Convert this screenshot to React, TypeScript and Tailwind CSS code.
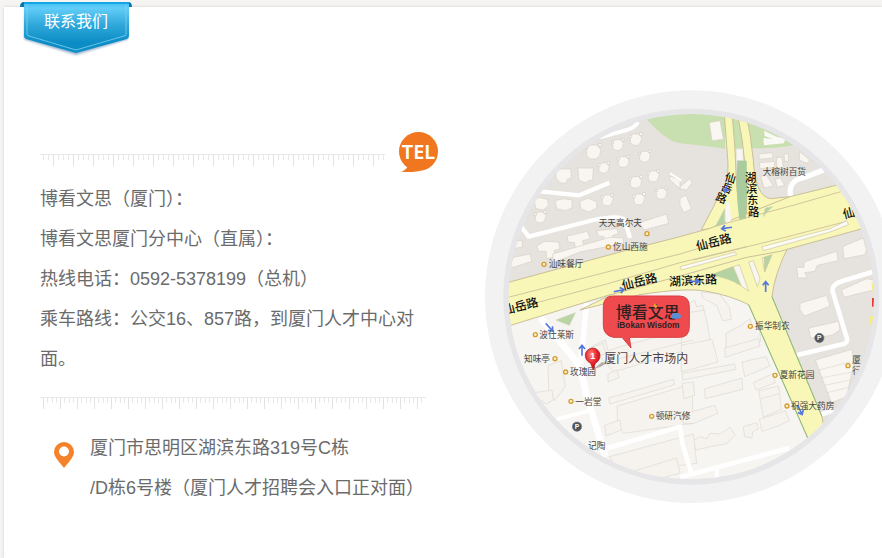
import React from "react";

const CJK = "font-['Liberation_Sans','Noto_Sans_CJK_SC',sans-serif]";

function Ribbon() {
  return (
    <h1 className="relative ml-4 -mt-[5px] flex h-14 w-28 justify-center text-white">
      <svg className="absolute inset-0 h-14 w-28" viewBox="0 0 112 56" aria-hidden="true">
        <defs>
          <linearGradient id="ribbon" x1="0" y1="0" x2="0" y2="1">
            <stop offset="0" stopColor="#3cbcf0" />
            <stop offset="0.12" stopColor="#62cdf8" />
            <stop offset="0.45" stopColor="#2fa8da" />
            <stop offset="0.8" stopColor="#0a8cc4" />
            <stop offset="1" stopColor="#0f8fc6" />
          </linearGradient>
          <filter id="soft" x="-10%" y="-10%" width="120%" height="130%">
            <feGaussianBlur stdDeviation="1.2" />
          </filter>
        </defs>
        <path d="M5 4H108V36Q108 38 106 38L56 53L6 38Q4 38 4 35Z" fill="#5a7fae" opacity="0.6" filter="url(#soft)" />
        <path d="M0 5Q0 0 4 0H108Q112 0 112 5Z" fill="#0876a6" />
        <path d="M4 0H109V34Q109 36 107 37L56 51L6 37Q4 36 4 34Z" fill="url(#ribbon)" />
        <path d="M4 0H109V2H4Z" fill="#14a5e4" />
        <path d="M7 2V32Q7 34 9 34L56 48L104 34Q106 34 106 32V2" fill="none" stroke="#7fd0f2" strokeWidth="1" opacity="0.8" />
      </svg>
      <span className="relative text-base leading-10 font-normal">联系我们</span>
    </h1>
  );
}

function Ruler({ id, step, start, className }: { id: string; step: number; start: number; className: string }) {
  return (
    <svg className={className} aria-hidden="true">
      <defs>
        <pattern id={id} x={start} y="0" width={step} height="13" patternUnits="userSpaceOnUse">
          <path d="M0 0H1V12H0Z" fill="#e2e2e2" />
          {[1, 2, 3].map((n) => (
            <rect key={n} x={Math.round((n * step) / 4)} y="1" width="1" height="5" fill="#e8e8e8" />
          ))}
        </pattern>
      </defs>
      <rect width="100%" height="13" fill={`url(#${id})`} />
      <rect width="100%" height="1" fill="#e8e8e8" />
    </svg>
  );
}

function TelBadge() {
  return (
    <svg className="h-10 w-10 shrink-0" viewBox="0 0 40 40" role="img" aria-label="TEL">
      <circle cx="20.500" cy="19.500" r="19.500" fill="#f0771f" />
      <path d="M22 39Q10 41 3 40Q8 38 10 34Z" fill="#f0771f" />
      <text x="20.500" y="27" textAnchor="middle" fontSize="20" fontWeight="600" fill="#fff" fontFamily="Noto Sans, sans-serif">TEL</text>
    </svg>
  );
}

function PinIcon() {
  return (
    <svg className="mt-[14px] h-[26px] w-5 shrink-0" viewBox="0 0 20 26" aria-hidden="true">
      <path d="M10 0A10 10 0 0 1 20 10C20 15 14 21 10 26C6 21 0 15 0 10A10 10 0 0 1 10 0ZM10 4.500A5 5 0 1 0 10 14.500A5 5 0 1 0 10 4.500Z" fill="#f5822a" fillRule="evenodd" />
    </svg>
  );
}

const houses: [number, number, number][] = [
  [341, 216, 21], [414, 195, 16], [468, 179, 17], [495, 230, 16], [431, 246, 16], [372, 264, 15],
  [468, 307, 17], [521, 289, 16], [478, 358, 16], [545, 341, 16], [383, 361, 16], [182, 412, 16],
];

const upperBlocks = [
  "228,268 272,266 274,294 262,298 258,310 240,308 228,294",
  "294,264 340,264 338,300 324,302 320,308 302,304 296,296",
  "162,360 178,352 202,358 206,376 190,390 168,386",
  "226,362 250,356 276,360 276,384 256,392 230,386",
  "300,364 324,354 350,366 350,384 326,396 302,386",
  "170,498 194,484 236,486 240,506 222,512 226,530 200,536 198,514 176,514",
  "262,468 322,454 330,476 308,482 312,502 286,508 284,488 264,486",
  "350,452 410,446 416,460 396,468 400,480 376,486 372,470 354,468",
  "478,428 560,402 566,430 492,450",
  "100,532 150,522 156,544 100,562 90,558",
  "110,484 126,480 128,500 104,506",
  "218,522 390,472 430,474 430,490 300,516 220,548",
  "568,288 600,300 600,326 570,300",
  "600,320 630,296 636,308 620,330 600,326",
  "600,355 618,345 634,386 612,398 600,375",
  "836,222 876,218 880,234 838,238",
  "838,248 884,244 884,262 840,266", "890,232 906,232 910,262 890,264",
  "912,222 924,220 926,244 914,244", "958,214 990,240 980,250 958,240",
  "842,288 860,286 880,318 852,324", "886,298 902,294 914,316 892,322",
  "972,546 1070,514 1074,542 1012,556 1004,574 974,578 982,594 954,594 950,562 972,562",
  "1088,500 1150,474 1160,510 1154,524 1092,536",
  "1084,630 1160,596 1180,600 1180,630 1092,652",
  "960,670 1040,646 1050,678 974,708 960,690",
  "986,744 1076,724 1080,750 1056,766 992,774",
  "1006,840 1116,808 1120,860 1100,950 1054,968",
];

const lowerBlocks = [
  "334,800 376,780 384,812 420,800 640,742 640,804 400,876",
  "340,800 370,790 376,820 348,832", "384,882 410,870 418,892 384,906",
  "386,954 580,898 584,914 390,972",
  "412,978 636,912 640,1030 430,1060 412,1028", "374,1036 420,1020 424,1050 378,1068",
  "204,856 244,842 256,920 224,962 206,930", "150,940 216,930 220,960 200,972",
  "664,636 718,642 748,680 754,718 728,722 710,676 668,654",
  "612,680 644,660 650,680 668,676 682,730 690,780 614,806 604,790",
  "738,760 782,736 810,716 816,740 838,744 842,784 738,812",
  "734,804 836,776 840,798 736,832", "604,796 696,778 714,846 604,876",
  "606,880 764,852 768,868 608,900", "606,910 640,906 644,946 612,956",
  "674,926 786,894 788,928 676,956", "786,846 858,830 870,858 794,890",
  "820,908 880,880 886,908 828,930", "836,932 896,918 904,988 850,1012",
  "604,1004 704,976 714,1000 642,1030 610,1030",
  "638,1082 660,1070 680,1076 690,1060 720,1062 750,1042 766,1066 738,1092 700,1098 648,1110",
  "790,1040 830,1028 836,1046 818,1056 816,1074 794,1070",
  "838,1018 916,992 928,1022 900,1036 846,1054",
  "388,1130 640,1062 650,1150 420,1180", "440,1180 590,1134 600,1180 520,1200",
];

const pins: [number, number, string, number, number][] = [
  [501, 461, "天天高尔夫", 356, 438], [385, 501, "仡山西施", 399, 509], [192, 553, "汕味餐厅", 206, 562],
  [166, 764, "波仕莱斯", 178, 773], [225, 836, "知味亭", 132, 845], [257, 876, "玫瑰园", 270, 886],
  [273, 964, "一岩堂", 286, 974], [515, 1009, "顿研汽修", 527, 1018], [811, 739, "振华制衣", 825, 748],
  [885, 886, "夏新花园", 899, 895], [921, 978, "祝强大药房", 933, 988], [1104, 857, "厦", 1117, 850],
];

const arrows: [number, number, number][] = [
  [417, 632, -12], [306, 811, -90], [740, 444, 172], [857, 620, -90], [642, 604, 0], [740, 322, 112], [208, 742, 48], [960, 990, 65],
];

const roadNames: [number, number, number, string][] = [
  [652, 512, -14, "仙岳路"], [429, 630, -14, "仙岳路"], [72, 704, -14, "仙岳路"], [1092, 416, -14, "仙"], [568, 618, -3, "湖滨东路"],
];

function MapPicture() {
  return (
    <svg
      className="block h-[413px] w-[413px] shrink-0"
      viewBox="15 30 1239 1239"
      role="img"
      aria-label="厦门人才市场内地图"
      fontFamily="Liberation Sans, Noto Sans CJK SC, sans-serif"
    >
      <defs>
        <clipPath id="lens"><circle cx="634" cy="650" r="548" /></clipPath>
        <radialGradient id="marker" cx="0.4" cy="0.3" r="0.8">
          <stop offset="0" stopColor="#ff8a80" />
          <stop offset="0.5" stopColor="#e8222a" />
          <stop offset="1" stopColor="#a80d14" />
        </radialGradient>
      </defs>
      <circle cx="634" cy="650" r="619" fill="#f2f2f2" />
      <circle cx="634" cy="650" r="564" fill="#e6e6e8" />
      <g clipPath="url(#lens)">
        <rect x="60" y="80" width="1150" height="1150" fill="#e6e2dd" />
        <path d="M60 740L600 590L720 600L810 660L1010 1100V1230H60Z" fill="#f7f5f1" />
        <path d="M1010 1040H1210V1230H960Z" fill="#f7f5f1" />

        <path d="M500 118Q560 185 600 190Q680 198 735 206V90H500Z" fill="#c8dfb0" />
        <path d="M750 90H1010V180Q900 210 815 204L760 206Z" fill="#c8dfb0" />
        <path d="M688 128L720 122L730 178L696 182Z" fill="#faf7f2" stroke="#d8d0c6" strokeWidth="2" />
        <path d="M852 152L890 170L920 176L910 188L854 168ZM850 174L914 180L912 190L852 196Z" fill="#fbf9f5" />

        <g fill="#f9f6f1" stroke="#d8d0c6" strokeWidth="2">
          {upperBlocks.map((p) => <polygon key={p} points={p} />)}
          {houses.map(([x, y, r]) => (
            <g key={`${x}-${y}`}>
              <path d={`M${x - r} ${y - r / 2}L${x - r / 2} ${y - r}H${x + r / 2}L${x + r} ${y - r / 3}L${x + r - 3} ${y + r / 2}L${x + r / 3} ${y + r}H${x - r / 2}L${x - r} ${y + r / 2}Z`} />
              <rect x={x + r - 6} y={y - r - 4} width="8" height="8" />
              <rect x={x - r - 4} y={y - r + 3} width="7" height="7" />
            </g>
          ))}
        </g>
        <g fill="#f6f3ee" stroke="#dcd8d1" strokeWidth="2">
          {lowerBlocks.map((p) => <polygon key={p} points={p} />)}
        </g>
        <path d="M1016 870L1110 846M1022 894L1118 876M1034 916L1110 900M1042 938L1106 922M842 956L896 942M610 700L676 690M416 836L640 780" fill="none" stroke="#dcd8d1" strokeWidth="2" />

        <g fill="none" stroke="#fff" strokeLinejoin="round">
          <path d="M360 172L440 150Q466 142 474 126" strokeWidth="12" />
          <path d="M180 334L298 346L388 308" strokeWidth="13" />
          <path d="M120 435L146 470L340 420Q420 404 434 420L450 474" strokeWidth="13" />
          <path d="M932 350Q922 300 975 292L1030 270" strokeWidth="16" />
          <path d="M940 828L1090 792Q1108 786 1098 766L1058 634Q1054 612 1090 602L1190 572" strokeWidth="14" />
          <path d="M570 280L604 302" strokeWidth="6" />
          <path d="M180 712L270 820Q304 855 318 940L376 1130" strokeWidth="20" />
          <path d="M320 670L302 850" strokeWidth="16" />
          <path d="M230 1018L334 990" strokeWidth="12" />
          <path d="M376 1106L600 1040L607 1090L634 1180" strokeWidth="14" />
          <path d="M600 1192L928 1104" strokeWidth="14" />
          <path d="M1010 1010L1060 990" strokeWidth="14" />
          <path d="M710 1160V1210" strokeWidth="12" />
        </g>

        <g fill="#f9f7b7" stroke="#c9bf98" strokeWidth="3">
          <path d="M732 90H755Q766 200 768 280Q772 370 786 430L664 450L724 335Q746 300 744 250Z" />
          <path d="M774 90H796Q812 160 820 240Q826 350 872 356L930 350L940 400L800 430Q804 250 774 110Z" />
          <path d="M300 690L480 644Q620 622 680 634Q750 646 806 674L990 1090H1040L1026 1010L876 650Q884 580 925 500L770 530L480 602Z" />
          <path d="M60 614L420 516L600 470L690 445L930 350L1190 286V434L900 514L800 532L600 588L370 650L60 746Z" />
        </g>
        <path d="M772 242H800Q804 330 798 416L778 420Q766 330 772 242Z" fill="#a9cc9e" />
        <path d="M734 386V430L706 440ZM856 384L878 380L862 394L850 410Z" fill="#b3d3a3" stroke="#cdd5b8" strokeWidth="2" />
        <path d="M690 586L758 560L782 616Q740 590 690 586ZM852 532L876 524L854 576Z" fill="#b3d3a3" stroke="#c5c79c" strokeWidth="2" />
        <path d="M228 720L286 698L268 736Z" fill="#b9d5a5" stroke="#cdd5b8" strokeWidth="2" />
        <path d="M770 208H788V240H770ZM738 370L748 366L754 420L738 432Z" fill="#f7f6f2" />
        <path d="M760 560L778 554L806 634L784 618ZM806 546L820 542L840 596L832 620ZM846 534L852 532L854 576Z" fill="#f7f6f2" stroke="#cfc69d" strokeWidth="2" />
        <path d="M88 651L420 566L600 522L700 492M88 690L380 612L600 548L800 500M700 440L932 378L1100 330M640 540L900 476L1100 424" fill="none" stroke="#cfc69d" strokeWidth="3" />
        <path d="M846 500L1050 446L1100 422L1106 434L1050 456L850 512Z" fill="#fbfaf5" stroke="#cfc69d" strokeWidth="2" />
        <path d="M600 560L766 516L770 524L604 570Z" fill="#fbfaf5" stroke="#cfc69d" strokeWidth="2" />
        <path d="M806 674L988 1084M876 650L1026 1010" fill="none" stroke="#8cbf78" strokeWidth="3" />
        <path d="M1176 654H1190V680H1176Z" fill="#e43b3b" />
        <path d="M1174 610H1190V636H1178ZM1170 708H1190V734H1170Z" fill="#f5ef80" />

        <g fontSize="36" fontWeight="500" fill="#111">
          {roadNames.map(([x, y, a, name]) => (
            <text key={`${x}-${y}`} x={x} y={y} transform={`rotate(${a} ${x} ${y})`}>{name}</text>
          ))}
          {["湖", "滨", "东", "路"].map((c, i) => <text key={c} x={795 + i * 3} y={305 + i * 34} fontSize="34">{c}</text>)}
          <text x="735" y="306" fontSize="33" transform="rotate(16 752 294)">仙</text>
          <text x="724" y="336" fontSize="33" transform="rotate(22 740 324)">岳</text>
          <text x="708" y="367" fontSize="33" transform="rotate(22 726 354)">路</text>
        </g>

        <g fill="none" stroke="#5577dd" strokeWidth="5">
          {arrows.map(([x, y, a]) => (
            <path key={`${x}-${y}`} d="M-16 0H15M4 -9L15 0L4 9" transform={`translate(${x} ${y}) rotate(${a})`} />
          ))}
        </g>

        {pins.map(([x, y, name, tx, ty]) => (
          <g key={`${x}-${y}`}>
            <circle cx={x} cy={y} r="6" fill="#fff3c4" stroke="#d59b32" strokeWidth="4" />
            <text x={tx} y={ty} fontSize="26" fill="#444">{name}</text>
          </g>
        ))}
        <text x="848" y="285" fontSize="26" fill="#444">大榕树百货</text>
        <text x="324" y="1106" fontSize="26" fill="#444">记陶</text>
        <text x="1117" y="882" fontSize="26" fill="#444">行</text>

        {[[291, 1040], [1018, 774]].map(([x, y]) => (
          <g key={x}>
            <circle cx={x} cy={y} r="14" fill="#4b545c" stroke="#7b838a" strokeWidth="2" />
            <text x={x} y={y + 7} fontSize="20" fontWeight="700" textAnchor="middle" fill="#fff">P</text>
          </g>
        ))}

        <path d="M400 648H598Q628 648 628 680V740Q628 772 598 772H448L453 804L426 772H400Q370 766 370 736V680Q370 648 400 648Z" fill="#ef4b4f" stroke="#d93e44" strokeWidth="3" />
        <text x="407" y="714" fontSize="48" fontWeight="500" fill="#30201f">博看文思</text>
        <path d="M524 670L532 678L528 686L520 678Z" fill="#f3a12c" />
        <path d="M574 704Q580 696 588 700Q598 696 602 706Q608 714 594 716H580Q570 714 574 704Z" fill="#5a91d6" />
        <text x="411" y="744" fontSize="25" fontWeight="700" fill="#30201f">iBokan Wisdom</text>

        <path d="M340 868L366 846L380 850L362 860Z" fill="#777" opacity="0.55" />
        <path d="M338 804A22 22 0 0 1 360 826Q360 842 346 850L340 870L332 850Q316 842 316 826A22 22 0 0 1 338 804Z" fill="url(#marker)" stroke="#a5161b" strokeWidth="2" />
        <text x="338" y="837" fontSize="27" fontWeight="700" textAnchor="middle" fill="#fff">1</text>
        <text x="373" y="850" fontSize="36" fill="#4b4144">厦门人才市场内</text>
      </g>
    </svg>
  );
}

export default function App() {
  return (
    <div className={`flex min-h-screen flex-col bg-[#f5f4f2] pt-[7px] pl-1 text-[#6b6b6b] ${CJK}`}>
      <main className="flex-1 bg-white shadow-[0_0_3px_rgba(0,0,0,0.15)]">
        <Ribbon />
        <div className="flex items-start gap-[47px] overflow-hidden pl-9">
          <section className="mt-[74px] w-[398px] shrink-0">
            <div className="flex items-center justify-between">
              <Ruler id="ruler-tel" step={20} start={13} className="mt-4 h-[13px] w-[345px]" />
              <TelBadge />
            </div>
            <div className="mt-[7px] w-[386px] text-lg leading-10">
              <p>博看文思（厦门）：</p>
              <p>博看文思厦门分中心（直属）：</p>
              <p>热线电话：0592-5378199（总机）</p>
              <p>乘车路线：公交16、857路，到厦门人才中心对面。</p>
            </div>
            <Ruler id="ruler-address" step={17} start={3} className="mt-[18px] block h-[13px] w-[386px]" />
            <div className="mt-[18px] flex gap-4 pl-[14px]">
              <PinIcon />
              <address className="text-lg leading-10 whitespace-nowrap not-italic">
                厦门市思明区湖滨东路319号C栋
                <br />
                /D栋6号楼（厦门人才招聘会入口正对面）
              </address>
            </div>
          </section>
          <div className="mt-8 shrink-0">
            <MapPicture />
          </div>
        </div>
      </main>
    </div>
  );
}
